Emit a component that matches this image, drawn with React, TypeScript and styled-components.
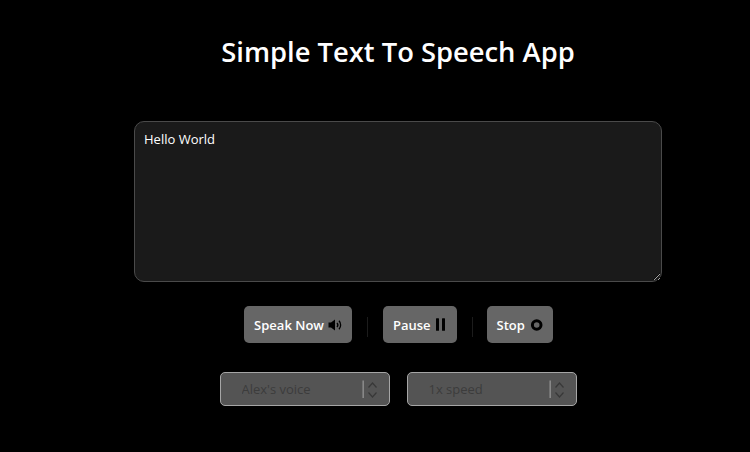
import React, { useState } from 'react';
import styled, { createGlobalStyle } from 'styled-components';

const GlobalStyle = createGlobalStyle`
  html, body {
    margin: 0;
    background: #000;
    overflow: hidden;
  }
  body {
    font-family: "Open Sans", "Noto Sans", sans-serif;
  }
`;

const Page = styled.div`
  width: 750px;
  height: 452px;
  box-sizing: border-box;
  padding: 32px 0 0 46px;
  display: flex;
  flex-direction: column;
  align-items: center;
  background: #000;
`;

const Title = styled.h1`
  margin: 0 0 49px;
  color: #fff;
  font-size: 27.35px;
  line-height: 40px;
  font-weight: 600;
`;

const TextArea = styled.textarea`
  display: block;
  width: 528px;
  height: 161px;
  box-sizing: border-box;
  padding: 8px 9px;
  margin: 0 0 24px;
  background: #1a1a1a;
  color: #fff;
  border: 1px solid #4a4a4a;
  border-radius: 10px;
  outline: none;
  font-family: inherit;
  font-size: 13px;
  line-height: 18px;
`;

const ButtonRow = styled.div`
  display: flex;
  align-items: center;
  padding-left: 1px;
  margin-bottom: 29px;
`;

const ActionButton = styled.button<{ $gap?: number }>`
  display: flex;
  align-items: center;
  gap: ${(props) => props.$gap ?? 5}px;
  height: 37px;
  padding: 0 10px;
  background: #666;
  color: #fff;
  border: none;
  border-radius: 5px;
  font-family: inherit;
  font-size: 13px;
  font-weight: 600;
  cursor: pointer;
`;

const Divider = styled.span<{ $right?: number }>`
  display: block;
  width: 1px;
  height: 20px;
  margin: 4px ${(props) => props.$right ?? 15}px 0 15px;
  background: #1c1c1c;
`;

const SelectRow = styled.div`
  display: flex;
  gap: 17px;
`;

const SelectWrap = styled.div`
  position: relative;
  width: 170px;
  height: 34px;
`;

const Select = styled.select`
  appearance: none;
  display: block;
  width: 100%;
  height: 100%;
  box-sizing: border-box;
  padding: 0 40px 0 21px;
  background: #545454;
  color: #3c3c3c;
  border: 1px solid #a6a6a6;
  border-radius: 5px;
  outline: none;
  opacity: 1;
  font-family: inherit;
  font-size: 13px;
`;

const Chevrons = styled.svg`
  position: absolute;
  top: 8px;
  right: 8px;
  pointer-events: none;
`;

const SpeakerIcon = () => (
  <svg width="14" height="12" viewBox="0 0 14 12" aria-hidden="true">
    <path d="M0.5 3.5H3L7 0.5V11.5L3 8.5H0.5Z" fill="#000" />
    <path d="M9 4a3 3 0 0 1 0 4M11 1.8a6.2 6.2 0 0 1 0 8.4" fill="none" stroke="#000" strokeWidth="1.3" />
  </svg>
);

const PauseIcon = () => (
  <svg width="11" height="13" viewBox="0 0 11 13" aria-hidden="true">
    <rect x="0" y="0.3" width="3" height="12.4" rx="0.5" fill="#000" />
    <rect x="6" y="0.3" width="3" height="12.4" rx="0.5" fill="#000" />
  </svg>
);

const StopIcon = () => (
  <svg width="13" height="12" viewBox="0 0 13 12" aria-hidden="true">
    <circle cx="6.7" cy="6" r="4.3" fill="none" stroke="#000" strokeWidth="3" />
  </svg>
);

const SelectChevrons = () => (
  <Chevrons width="20" height="20" viewBox="0 0 20 20" aria-hidden="true">
    <path d="M1.2 0.5V18" stroke="#8c8c8c" strokeWidth="1.5" fill="none" />
    <path d="M6.5 7.5L10.5 3L14.5 7.5M6.5 12.5L10.5 17L14.5 12.5" stroke="#383838" strokeWidth="1.2" fill="none" />
  </Chevrons>
);

export default function App() {
  const [text, setText] = useState('Hello World');

  return (
    <Page>
      <GlobalStyle />
      <Title>Simple Text To Speech App</Title>
      <TextArea value={text} onChange={(e) => setText(e.target.value)} spellCheck={false} />
      <ButtonRow>
        <ActionButton $gap={4}>Speak Now <SpeakerIcon /></ActionButton>
        <Divider />
        <ActionButton>Pause <PauseIcon /></ActionButton>
        <Divider $right={14} />
        <ActionButton>Stop <StopIcon /></ActionButton>
      </ButtonRow>
      <SelectRow>
        <SelectWrap>
          <Select disabled>
            <option>Alex's voice</option>
          </Select>
          <SelectChevrons />
        </SelectWrap>
        <SelectWrap>
          <Select disabled>
            <option>1x speed</option>
          </Select>
          <SelectChevrons />
        </SelectWrap>
      </SelectRow>
    </Page>
  );
}
